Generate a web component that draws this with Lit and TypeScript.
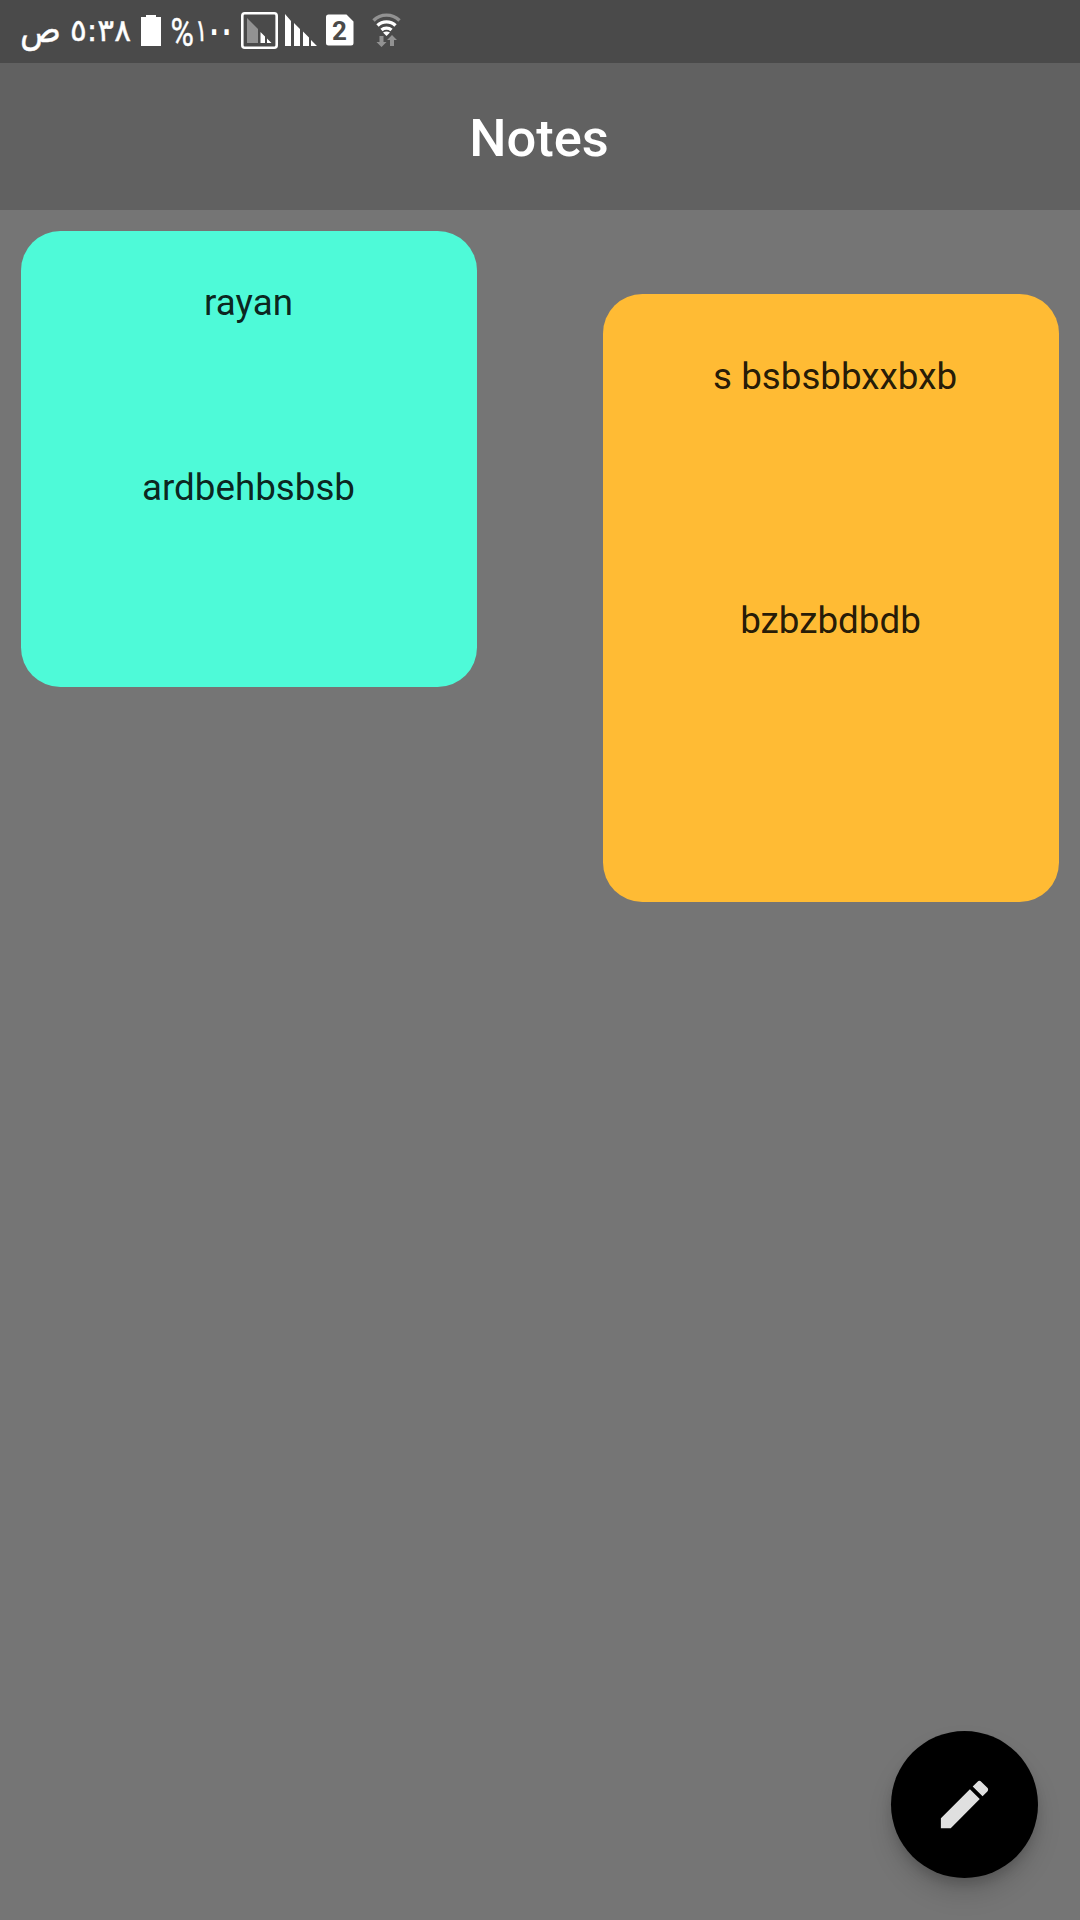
import { LitElement, html, css } from "lit";
import { customElement, property } from "lit/decorators.js";

@customElement("status-bar")
class StatusBar extends LitElement {
  static styles = css`
    :host {
      display: flex;
      align-items: stretch;
      height: 63px;
      padding-left: 18px;
      background: #4a4a4a;
      box-sizing: border-box;
    }
    svg {
      display: block;
      height: 63px;
      flex: none;
      overflow: visible;
      fill: #fff;
    }
    .clock { width: 118px; }
    .battery { width: 32px; }
    .percent { width: 68px; }
    .roaming { width: 45px; }
    .signal { width: 39px; }
    .sim { width: 44px; }
    .wifi { width: 40px; }
    .arabic {
      font-family: "DejaVu Sans", sans-serif;
      font-size: 31px;
      stroke: #fff;
      stroke-width: 0.4;
    }
    .period { font-size: 37px; }
    .zeros { stroke-width: 2; }
    .sign {
      font-family: Roboto, sans-serif;
      font-size: 38px;
      stroke: #fff;
      stroke-width: 0.4;
    }
    .digit {
      font-family: Roboto, sans-serif;
      font-size: 26px;
      font-weight: 700;
      fill: #4a4a4a;
    }
    .dim { fill: #929292; }
    .frame {
      fill: none;
      stroke: #fff;
      stroke-width: 2.6;
    }
    .arc {
      fill: none;
      stroke: #fff;
      stroke-width: 3.4;
    }
    .arc-dim {
      fill: none;
      stroke: #929292;
      stroke-width: 3.4;
    }
  `;

  render() {
    return html`
      <svg class="clock" viewBox="18 0 118 63">
        <text class="arabic period" x="20" y="42" textLength="41" lengthAdjust="spacingAndGlyphs">ص</text>
        <text class="arabic" x="70" y="41" textLength="61" lengthAdjust="spacingAndGlyphs">٥:٣٨</text>
      </svg>
      <svg class="battery" viewBox="136 0 32 63">
        <path d="M146 15h10v2h5v29h-20V17h5z" />
      </svg>
      <svg class="percent" viewBox="168 0 68 63">
        <text class="sign" transform="translate(170.500 45.500) scale(0.84 1)">%</text>
        <text class="arabic" transform="translate(195 41) scale(0.76 1)">١<tspan class="zeros">٠٠</tspan></text>
      </svg>
      <svg class="roaming" viewBox="236 0 45 63">
        <rect class="frame" x="242.3" y="13.3" width="34.4" height="34.4" rx="2.5" />
        <path class="dim" d="M247 18l11 11v14h-11z" />
        <path d="M260.500 32l4.500 4.500v6.500h-4.500zM267 38.500l4.500 4.500h-4.500z" />
      </svg>
      <svg class="signal" viewBox="281 0 39 63">
        <path d="M285 14l6 7v25h-6zM294 23l6 6v17h-6zM303 31.500l6 6v8.500h-6zM311 40l6 6h-6z" />
      </svg>
      <svg class="sim" viewBox="320 0 44 63">
        <path d="M328.500 14.500h18l7 7v21.500a2.500 2.500 0 0 1-2.500 2.500h-22.500a2.500 2.500 0 0 1-2.500-2.500v-26a2.500 2.500 0 0 1 2.500-2.500z" />
        <text class="digit" x="339.500" y="39.500" text-anchor="middle">2</text>
      </svg>
      <svg class="wifi" viewBox="364 0 40 63">
        <path class="arc-dim" d="M373.500 20.500a18.500 18.500 0 0 1 26 0" />
        <path class="arc" d="M377.500 25.500a13 13 0 0 1 18 0" />
        <path class="arc" d="M381.500 30a7.500 7.500 0 0 1 10 0" />
        <path d="M383 32.500q3.500-2 7 0l-3.500 3.500z" />
        <path class="dim" d="M379.500 36h4v6h3l-5 5-5-5h3zM390 46h4v-6h3l-5-5-5 5h3z" />
      </svg>
    `;
  }
}

@customElement("note-card")
class NoteCard extends LitElement {
  @property() heading = "";
  @property() body = "";

  static styles = css`
    :host {
      display: flex;
      flex-direction: column;
      align-items: center;
      width: 456px;
      padding-right: 1px;
      box-sizing: border-box;
      border-radius: 39.4px;
      font-size: 36.75px;
      line-height: 43px;
      color: rgba(0, 0, 0, 0.87);
      white-space: pre;
    }
  `;

  render() {
    return html`<span>${this.heading}</span><span>${this.body}</span>`;
  }
}

@customElement("app-root")
class AppRoot extends LitElement {
  static styles = css`
    :host {
      display: flex;
      flex-direction: column;
      position: relative;
      height: 1920px;
      background: #757575;
      font-family: Roboto, sans-serif;
    }
    .appbar {
      display: flex;
      align-items: center;
      justify-content: center;
      height: 147px;
      padding: 2px 2px 0 0;
      box-sizing: border-box;
      background: #616161;
      color: #fff;
      font-size: 52.5px;
      font-weight: 500;
      line-height: 62px;
    }
    .notes {
      display: flex;
      justify-content: space-between;
      align-items: flex-start;
      padding: 21px;
    }
    .mint {
      height: 456px;
      padding-top: 50px;
      gap: 142px;
      background: #4efad8;
    }
    .amber {
      height: 608px;
      margin-top: 63px;
      padding-top: 61px;
      gap: 201px;
      background: #ffbb34;
    }
    .fab {
      position: absolute;
      right: 42px;
      bottom: 42px;
      width: 147px;
      height: 147px;
      display: flex;
      align-items: center;
      justify-content: center;
      padding: 0;
      border: 0;
      border-radius: 50%;
      background: #000;
      box-shadow:
        0 8px 13px -3px rgba(0, 0, 0, 0.2),
        0 16px 26px 0 rgba(0, 0, 0, 0.12);
    }
    .pencil {
      width: 63px;
      height: 63px;
      fill: #e0e0e0;
    }
  `;

  render() {
    return html`
      <status-bar></status-bar>
      <header class="appbar">Notes</header>
      <main class="notes">
        <note-card class="mint" heading="rayan" body="ardbehbsbsb"></note-card>
        <note-card class="amber" heading=" s bsbsbbxxbxb" body="bzbzbdbdb"></note-card>
      </main>
      <button class="fab" aria-label="Edit">
        <svg class="pencil" viewBox="0 0 24 24">
          <path d="M3 17.250V21h3.750L17.810 9.940l-3.750-3.750L3 17.250zM20.710 7.040c.39-.39.39-1.020 0-1.410l-2.340-2.340c-.39-.39-1.020-.39-1.410 0l-1.830 1.830 3.750 3.750 1.830-1.830z" />
        </svg>
      </button>
    `;
  }
}
